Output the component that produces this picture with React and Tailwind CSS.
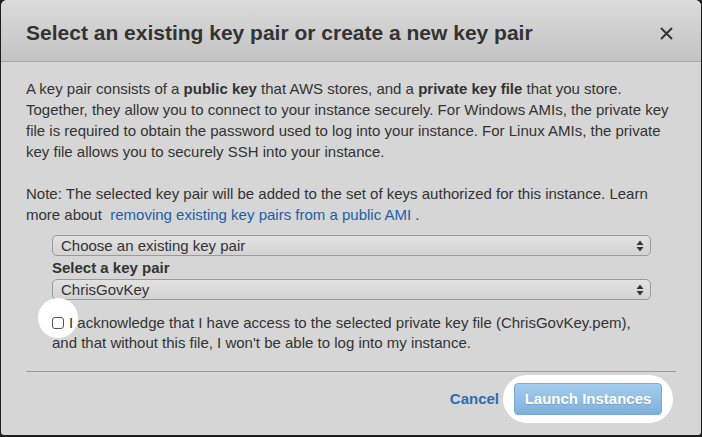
import React from "react";

function Arrows() {
  return (
    <svg width="8" height="12" viewBox="0 0 8 12" className="absolute right-[6px] top-1/2 -translate-y-1/2">
      <path d="M4 0.5 L7.5 5 L0.5 5 Z" fill="#333" />
      <path d="M4 11.5 L7.5 7 L0.5 7 Z" fill="#333" />
    </svg>
  );
}

function FakeSelect({ children }) {
  return (
    <div className="relative h-[21px] w-[599px] rounded-[5px] border border-[#9a9a9a] bg-gradient-to-b from-[#e2e2e2] to-[#d3d3d3] pl-[8px] text-[15px] leading-[19px] text-[#333]">
      {children}
      <Arrows />
    </div>
  );
}

export default function App() {
  return (
    <div
      className="w-[702px] h-[437px] bg-[#1e1e1e] px-px pb-[2px]"
      style={{ fontFamily: '"Liberation Sans", Arial, Helvetica, sans-serif' }}
    >
      <div className="h-full flex flex-col overflow-hidden rounded-t-[6px] rounded-b-[3px] bg-[#d6d6d6]">
        <div className="h-[62px] shrink-0 flex items-center justify-between border-b border-[#a9a9a9] bg-gradient-to-b from-[#dbdbdb] to-[#c3c3c3] pl-[25px] pr-[28px]">
          <h1 className="text-[21px] font-bold text-[#333] pt-[5px]">
            Select an existing key pair or create a new key pair
          </h1>
          <svg width="13" height="13" viewBox="0 0 13 13" className="mt-[6px]">
            <path d="M1 1 L12 12 M12 1 L1 12" stroke="#333" strokeWidth="2" />
          </svg>
        </div>
        <div className="flex-1 flex flex-col px-[25px] pt-[16px] text-[15px] text-[#333]">
          <p className="leading-[21px]">
            A key pair consists of a <b>public key</b> that AWS stores, and a <b>private key file</b> that you store.
            Together, they allow you to connect to your instance securely. For Windows AMIs, the private key
            file is required to obtain the password used to log into your instance. For Linux AMIs, the private
            key file allows you to securely SSH into your instance.
          </p>
          <p className="leading-[21px] mt-[21px]">
            Note: The selected key pair will be added to the set of keys authorized for this instance. Learn
            more about{" "}
            <span className="text-[#1d5ea8]">&nbsp;removing existing key pairs from a public AMI</span> .
          </p>
          <div className="ml-[26px] mt-[10px] flex flex-col">
            <FakeSelect>Choose an existing key pair</FakeSelect>
            <div className="font-bold leading-[22px] mt-[1px]">Select a key pair</div>
            <FakeSelect>ChrisGovKey</FakeSelect>
            <div className="relative mt-[13px] leading-[20px]">
              <div className="absolute left-[-14px] top-[-15px] h-[40px] w-[40px] rounded-full bg-white" />
              <span className="relative inline-block h-[12px] w-[12px] rounded-[3px] border border-[#555] bg-white mr-[5px] align-[-1px]" />
              <span className="relative">
                I acknowledge that I have access to the selected private key file (ChrisGovKey.pem),
                <br />
                and that without this file, I won't be able to log into my instance.
              </span>
            </div>
          </div>
          <div className="mt-[18px] h-px bg-[#9c9c9c]" />
          <div className="flex items-center justify-end gap-[4px] mt-[3px] pr-[3px]">
            <span className="font-bold text-[#2b6cb5]">Cancel</span>
            <div className="rounded-full bg-white px-[11px] py-[8px]">
              <div
                className="h-[32px] w-[148px] flex items-center justify-center rounded-[4px] border border-[#79a8d4] bg-gradient-to-b from-[#a3cdee] to-[#7fb0dc] font-bold text-white"
                style={{ textShadow: "0 1px 1px rgba(0,0,0,0.15)" }}
              >
                Launch Instances
              </div>
            </div>
          </div>
        </div>
      </div>
    </div>
  );
}
